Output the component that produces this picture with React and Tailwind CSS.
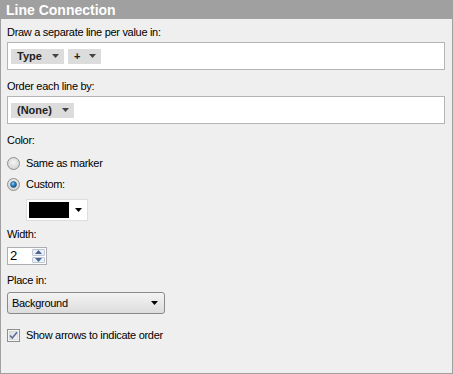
import React from "react";

const Tri = ({ className = "" }) => (
  <svg width="7" height="4" viewBox="0 0 7 4" className={className}>
    <path d="M0 0H7L3.5 4Z" fill="currentColor" />
  </svg>
);

const Pill = ({ label, w }) => (
  <div
    className={`flex h-[15px] items-center justify-between bg-[#dcdcdc] pl-[6px] pr-[5px] text-[#222] font-bold tracking-normal ${w}`}
  >
    <span className="leading-none">{label}</span>
    <Tri className="text-[#444]" />
  </div>
);

const Radio = ({ checked }) => (
  <svg width="13" height="13" viewBox="0 0 13 13">
    <defs>
      <radialGradient id={checked ? "rgc" : "rgu"} cx="50%" cy="40%" r="60%">
        <stop offset="0" stopColor="#f4f4f4" />
        <stop offset="1" stopColor="#d2d2d2" />
      </radialGradient>
      <radialGradient id="dot" cx="40%" cy="35%" r="70%">
        <stop offset="0" stopColor="#8fd0f7" />
        <stop offset="0.5" stopColor="#2a81c4" />
        <stop offset="1" stopColor="#134a78" />
      </radialGradient>
    </defs>
    <circle cx="6.5" cy="6.5" r="6" fill={`url(#${checked ? "rgc" : "rgu"})`} stroke="#8e8f8f" />
    {checked && <circle cx="6.5" cy="6.5" r="3" fill="url(#dot)" stroke="#1c4f7c" strokeWidth="0.6" />}
  </svg>
);

const Checkbox = () => (
  <svg width="13" height="13" viewBox="0 0 13 13">
    <defs>
      <linearGradient id="cbg" x1="0" y1="0" x2="1" y2="1">
        <stop offset="0" stopColor="#dcdcdc" />
        <stop offset="1" stopColor="#f6f6f6" />
      </linearGradient>
    </defs>
    <rect x="0.5" y="0.5" width="12" height="12" fill="#f4f4f4" stroke="#8f8f8f" />
    <rect x="2.5" y="2.5" width="8" height="8" fill="url(#cbg)" stroke="#c6c6c6" strokeWidth="0.5" />
    <path d="M3 6.5L5.3 9L10 3.2" fill="none" stroke="#5d6e9e" strokeWidth="1.6" />
  </svg>
);

export default function App() {
  return (
    <div
      className="flex h-[374px] w-[453px] flex-col text-[11px] text-black"
      style={{ fontFamily: '"Liberation Sans", Arial, sans-serif' }}
    >
      <div className="flex h-[19px] items-center bg-[#a0a0a0] pl-[6px] text-[14px] font-bold leading-none text-white">
        Line Connection
      </div>
      <div className="flex flex-1 flex-col border-x border-b border-[#a0a0a0] bg-[#efefef] pl-[6px] pr-[7px] pt-[7px] tracking-[-0.3px]">
        <div className="h-[13px] leading-[13px]">Draw a separate line per value in:</div>
        <div className="mt-[3px] flex h-[28px] items-center gap-[4px] border border-[#b4b4b4] bg-white pl-[3px]">
          <Pill label="Type" w="w-[53px]" />
          <Pill label="+" w="w-[33px]" />
        </div>

        <div className="mt-[10px] h-[13px] leading-[13px]">Order each line by:</div>
        <div className="mt-[3px] flex h-[28px] items-center border border-[#b4b4b4] bg-white pl-[3px]">
          <Pill label="(None)" w="w-[63px]" />
        </div>

        <div className="mt-[10px] h-[13px] leading-[13px]">Color:</div>
        <div className="mt-[8px] flex h-[16px] items-center gap-[6px]">
          <Radio />
          <span>Same as marker</span>
        </div>
        <div className="mt-[5px] flex h-[16px] items-center gap-[6px]">
          <Radio checked />
          <span>Custom:</span>
        </div>
        <div className="ml-[19px] mt-[7px] flex h-[22px] w-[62px] items-center border border-[#dedede] bg-white pl-[2px] pr-[5px]">
          <div className="h-[16px] w-[40px] bg-black" />
          <Tri className="ml-auto text-black" />
        </div>

        <div className="mt-[7px] h-[13px] leading-[13px]">Width:</div>
        <div className="mt-[6px] flex h-[18px] w-[40px] border border-[#abadb3] bg-white">
          <div className="flex-1 pl-[2px] text-[13px] leading-[16px]">2</div>
          <div className="flex w-[15px] flex-col gap-[1px] p-[1px]">
            <div className="flex flex-1 items-center justify-center rounded-[1px] border border-[#c0c8d8] bg-[#eaf0f8]">
              <svg width="7" height="4" viewBox="0 0 7 4"><path d="M0 4H7L3.5 0Z" fill="#4c6595" /></svg>
            </div>
            <div className="flex flex-1 items-center justify-center rounded-[1px] border border-[#c0c8d8] bg-[#eaf0f8]">
              <svg width="7" height="4" viewBox="0 0 7 4"><path d="M0 0H7L3.5 4Z" fill="#4c6595" /></svg>
            </div>
          </div>
        </div>

        <div className="mt-[9px] h-[13px] leading-[13px]">Place in:</div>
        <div className="mt-[5px] flex h-[22px] w-[158px] items-center rounded-[3px] border border-[#8a8a8a] bg-gradient-to-b from-[#f4f4f4] to-[#dcdcdc] pl-[4px] pr-[6px]">
          <span>Background</span>
          <Tri className="ml-auto text-black" />
        </div>

        <div className="mt-[15px] flex h-[13px] items-center gap-[6px]">
          <Checkbox />
          <span>Show arrows to indicate order</span>
        </div>
      </div>
    </div>
  );
}
